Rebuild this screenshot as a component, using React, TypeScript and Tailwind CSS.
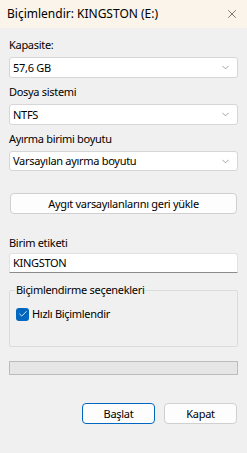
import { ChevronDown, X, Check } from "lucide-react";

const font = { fontFamily: "'Noto Sans', 'Open Sans', sans-serif" };

// body text in the dialog is a bit smaller/tighter than the title
const txt = "text-[11px] leading-4 tracking-[-0.3px] text-black";

function Combo({ value, h = "h-[21px]" }: { value: string; h?: string }) {
  return (
    <div
      className={`${h} flex items-center justify-between rounded-[3px] border border-[#d6d6d6] bg-white pl-[3px] pr-[6px]`}
    >
      <span className={txt}>{value}</span>
      <ChevronDown size={11} strokeWidth={1.2} className="text-[#5a5a5a]" />
    </div>
  );
}

function Label({ text, className = "" }: { text: string; className?: string }) {
  return <p className={`h-4 ${txt} ${className}`}>{text}</p>;
}

export default function App() {
  return (
    <div className="h-[453px] w-[247px] overflow-hidden bg-[#f0f0f0]" style={font}>
      <div className="flex h-[28px] items-center justify-between bg-[#faf4eb] pl-[7px] pr-[8px]">
        <span className="text-[12px] leading-4 text-black">Biçimlendir: KINGSTON (E:)</span>
        <X size={14} strokeWidth={1.1} className="text-[#333]" />
      </div>

      <div className="flex flex-col px-[9px]">
        <Label text="Kapasite:" className="mt-[9px]" />
        <div className="mt-[4px]">
          <Combo value="57,6 GB" />
        </div>

        <Label text="Dosya sistemi" className="mt-[6px]" />
        <div className="mt-[4px]">
          <Combo value="NTFS" />
        </div>

        <Label text="Ayırma birimi boyutu" className="mt-[6px]" />
        <div className="mt-[4px]">
          <Combo value="Varsayılan ayırma boyutu" h="h-[20px]" />
        </div>

        <button
          type="button"
          className={`mx-px mt-[22px] h-[21px] rounded-[4px] border border-[#d0d0d0] bg-[#fdfdfd] ${txt}`}
        >
          Aygıt varsayılanlarını geri yükle
        </button>

        <Label text="Birim etiketi" className="mt-[21px]" />
        <div className="mt-[2px] flex h-[20px] items-center rounded-t-[3px] border border-[#e2e2e2] border-b-[#8c8c8c] bg-white pl-[3px]">
          <span className={txt}>KINGSTON</span>
        </div>

        <fieldset className="mt-[9px] h-[65px] rounded-[2px] border border-[#dcdcdc] px-[6px]">
          <legend className={`ml-[-1px] px-[1px] ${txt}`}>Biçimlendirme seçenekleri</legend>
          <label className="mt-[8px] flex items-center gap-[3px]">
            <span className="flex h-[13px] w-[13px] items-center justify-center rounded-[3px] bg-[#0067c0]">
              <Check size={10} strokeWidth={2} className="text-white" />
            </span>
            <span className={txt}>Hızlı Biçimlendir</span>
          </label>
        </fieldset>

        <div className="mt-[14px] h-[14px] border border-[#bcbcbc] bg-[#e6e6e6]" />

        <div className="mt-[28px] flex justify-end gap-[9px] pr-px">
          <button
            type="button"
            className={`h-[21px] w-[73px] rounded-[4px] border border-[#0067c0] bg-[#fdfdfd] ${txt}`}
          >
            Başlat
          </button>
          <button
            type="button"
            className={`h-[21px] w-[73px] rounded-[4px] border border-[#d0d0d0] bg-[#fdfdfd] ${txt}`}
          >
            Kapat
          </button>
        </div>
      </div>
    </div>
  );
}
